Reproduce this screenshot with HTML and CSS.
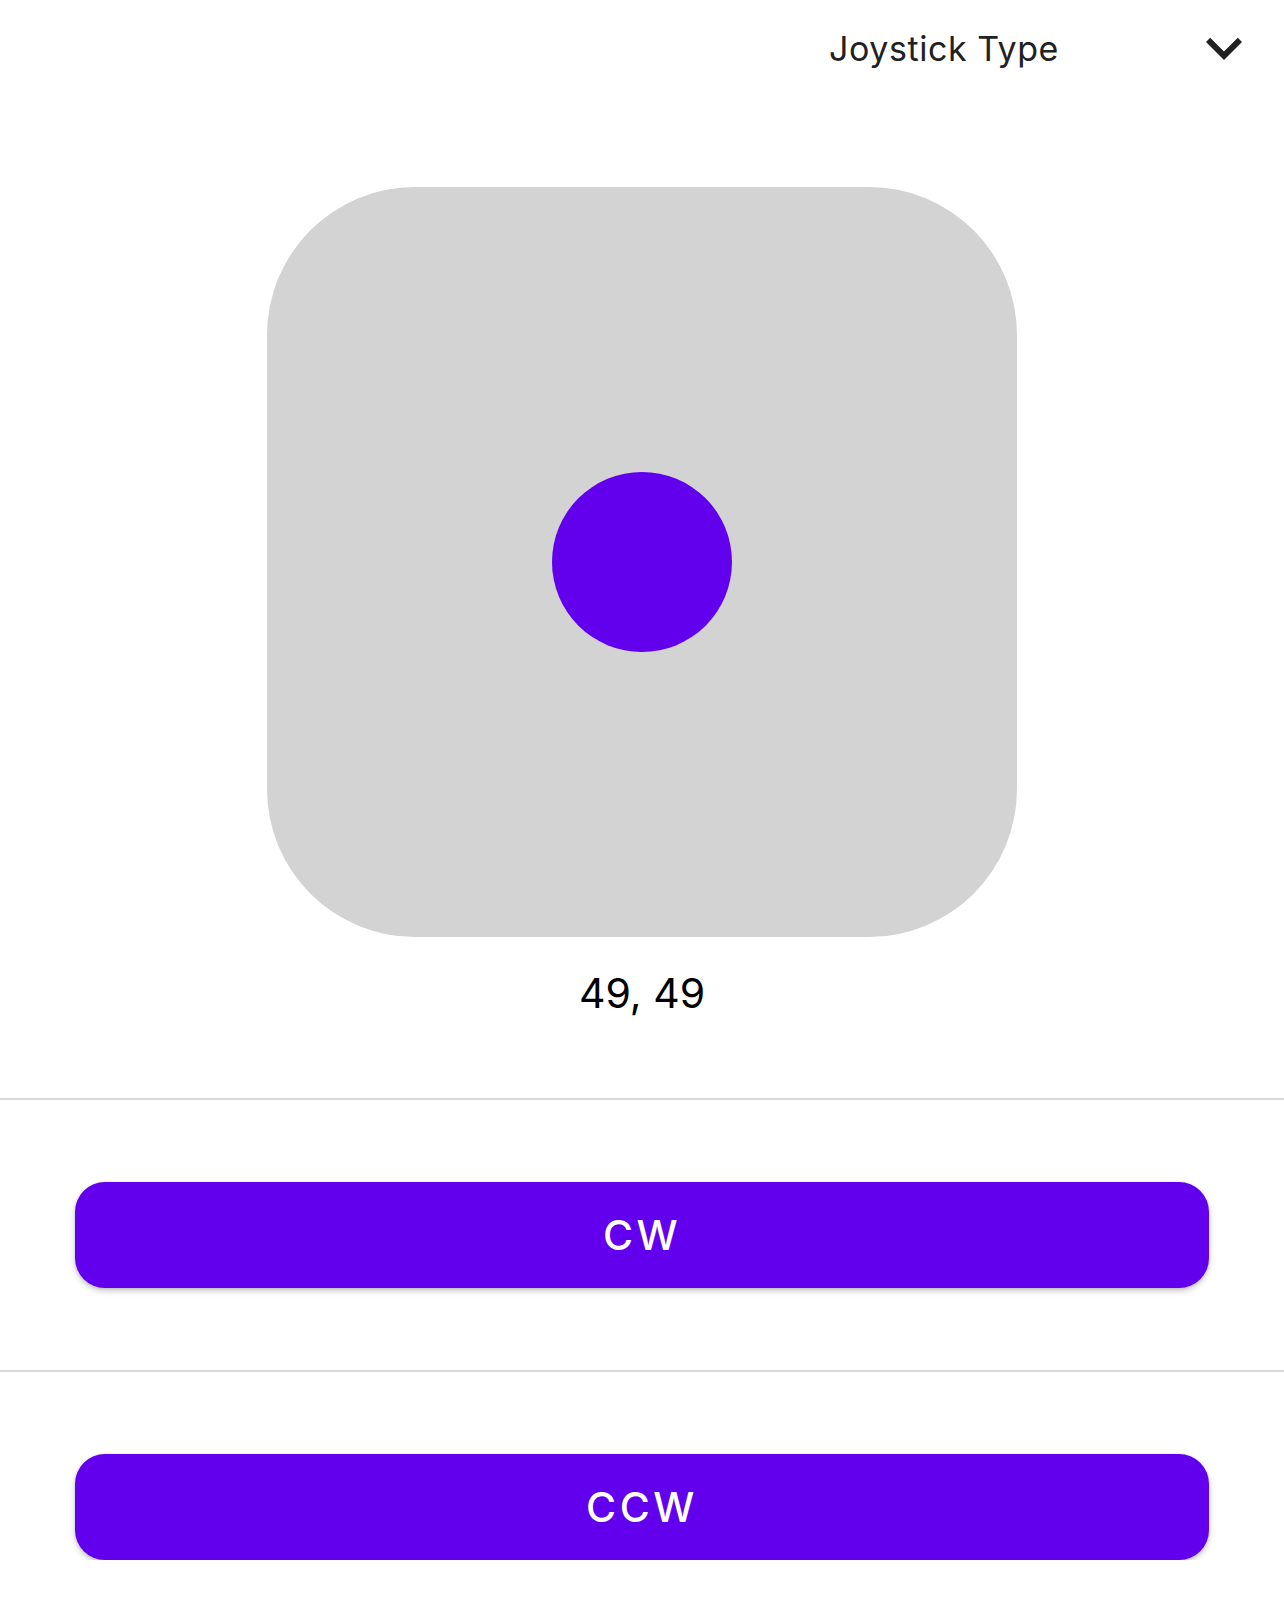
FILE: index.html
```html
<!DOCTYPE html>
<html>
<head>
<meta charset="utf-8">
<link rel="stylesheet" href="styles.css">
</head>
<body>
<div class="header">
  <span class="spinner-label">Joystick Type</span>
  <svg class="chevron" viewBox="0 0 24 24" width="72" height="72"><path d="M16.59 8.59L12 13.17 7.41 8.59 6 10l6 6 6-6z" fill="#212121"/></svg>
</div>
<div class="pad-wrap">
  <div class="pad">
    <div class="knob"></div>
  </div>
</div>
<div class="coords">49, 49</div>
<div class="section">
  <button class="btn">CW</button>
</div>
<div class="section">
  <button class="btn">CCW</button>
</div>
</body>
</html>
```

FILE: styles.css
```css
html, body {
  margin: 0;
  padding: 0;
  background: #ffffff;
  font-family: Inter, Roboto, "Noto Sans", sans-serif;
}
.header {
  height: 96px;
  display: flex;
  justify-content: flex-end;
  align-items: center;
  padding-right: 24px;
}
.spinner-label {
  font-size: 34px;
  line-height: 40px;
  color: #212121;
  margin-right: 129px;
  letter-spacing: 0.55px;
  padding-top: 2px;
}
.chevron {
  display: block;
}
.pad-wrap {
  display: flex;
  justify-content: center;
  margin-top: 91px;
}
.pad {
  width: 750px;
  height: 750px;
  border-radius: 148px;
  background: #d3d3d3;
  display: flex;
  align-items: center;
  justify-content: center;
}
.knob {
  width: 180px;
  height: 180px;
  border-radius: 50%;
  background: #6200ee;
}
.coords {
  margin-top: 32px;
  text-align: center;
  font-size: 41px;
  line-height: 49px;
  color: #000000;
}
.coords + .section {
  margin-top: 80px;
}
.section {
  border-top: 2px solid #d8d8d8;
  padding: 82px 75px;
}
.section + .section {
  padding-bottom: 0;
}
.btn {
  display: block;
  width: 100%;
  height: 106px;
  border: none;
  border-radius: 30px;
  background: #6200ee;
  color: #ffffff;
  font-family: Inter, Roboto, "Noto Sans", sans-serif;
  font-size: 41px;
  font-weight: 500;
  letter-spacing: 3.5px;
  box-shadow: 0 3px 6px rgba(0,0,0,0.2), 0 1px 3px rgba(0,0,0,0.12);
  padding: 0;
}
```
